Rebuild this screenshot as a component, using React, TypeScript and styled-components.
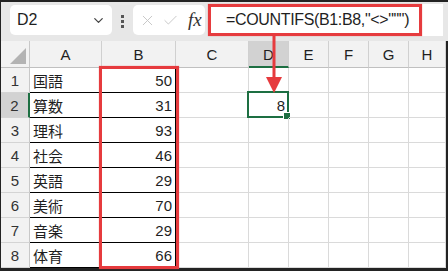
import React from 'react'
import styled, { createGlobalStyle } from 'styled-components'
import { ChevronDown, X, Check } from 'lucide-react'

const GREEN = '#1d6f42'
const RED = '#e63b3e'

const GlobalStyle = createGlobalStyle`
  body {
    margin: 0;
    background: #232323;
  }
`

const Frame = styled.div`
  width: 448px;
  height: 271px;
  box-sizing: border-box;
  padding: 2px 0 0 1px;
  background: #232323;
  overflow: hidden;
`

const Window = styled.div`
  position: relative;
  width: 447px;
  font-family: 'Liberation Sans', 'Noto Sans CJK JP', sans-serif;
  color: #1f1f1f;
`

const Toolbar = styled.div`
  display: flex;
  align-items: flex-start;
  height: 39px;
  box-sizing: border-box;
  padding: 2px 0 0 9px;
  background: #e7e7e7;
`

const NameBox = styled.div`
  display: flex;
  align-items: center;
  justify-content: space-between;
  width: 102px;
  height: 30px;
  margin-top: 1px;
  box-sizing: border-box;
  padding: 0 6px 0 7px;
  background: #fff;
  border-radius: 5px;
  font-size: 16px;
`

const Dots = styled.div`
  display: flex;
  flex-direction: column;
  gap: 2px;
  width: 21px;
  align-items: center;
  padding-top: 11px;

  span {
    width: 3px;
    height: 3px;
    background: #555;
  }
`

const IconBox = styled.div`
  display: flex;
  align-items: center;
  gap: 6px;
  width: 72px;
  height: 30px;
  margin-top: 1px;
  box-sizing: border-box;
  padding-left: 6px;
  background: #fff;
  border-radius: 5px;
  color: #c4c4c4;
`

const Fx = styled.span`
  margin-left: 3px;
  font-family: 'Liberation Serif', serif;
  font-style: italic;
  font-size: 19px;
  color: #333;
`

const FormulaBar = styled.div`
  display: flex;
  width: 235px;
  height: 32px;
  margin-left: 3px;
  background: #fff;
`

const Highlight = styled.div`
  display: flex;
  align-items: center;
  width: 214px;
  height: 32px;
  box-sizing: border-box;
  padding-left: 15px;
  border: 3px solid ${RED};
  box-shadow: 0 0 1px rgba(230, 59, 62, 0.6);
  font-size: 16px;
  letter-spacing: -0.35px;
  white-space: nowrap;
`

const Sheet = styled.div`
  display: grid;
  grid-template-columns: 29px 72px 74px 73px 40px 40px 40px 40px 37px;
  grid-template-rows: 27px repeat(8, 25px);
  width: 445px;
  background: #fff;
  font-size: 15px;
`

const Corner = styled.div`
  position: relative;
  box-sizing: border-box;
  background: #f2f2f2;
  border-right: 1px solid #c8c8c8;
  border-bottom: 1px solid #c0c0c0;

  &::after {
    content: '';
    position: absolute;
    right: 3px;
    bottom: 3px;
    border-style: solid;
    border-width: 0 0 16px 16px;
    border-color: transparent transparent #b3b3b3 transparent;
  }
`

const ColHead = styled.div<{ $active?: boolean }>`
  display: flex;
  align-items: center;
  justify-content: center;
  box-sizing: border-box;
  padding-top: 1px;
  background: ${(p) => (p.$active ? '#d2d2d2' : '#f2f2f2')};
  border-right: 1px solid #d0d0d0;
  border-bottom: ${(p) => (p.$active ? `2px solid ${GREEN}` : '1px solid #c0c0c0')};
`

const RowHead = styled.div<{ $active?: boolean }>`
  display: flex;
  align-items: center;
  justify-content: center;
  box-sizing: border-box;
  background: ${(p) => (p.$active ? '#d2d2d2' : '#f2f2f2')};
  border-right: ${(p) => (p.$active ? `2px solid ${GREEN}` : '1px solid #c8c8c8')};
  border-bottom: 1px solid #d4d4d4;
  color: #333;
`

const Cell = styled.div<{ $table?: boolean; $num?: boolean }>`
  position: relative;
  display: flex;
  align-items: center;
  justify-content: ${(p) => (p.$num ? 'flex-end' : 'flex-start')};
  box-sizing: border-box;
  padding: 0 3px;
  border-right: 1px solid ${(p) => (p.$table ? '#000' : '#dadada')};
  border-bottom: 1px solid ${(p) => (p.$table ? '#000' : '#dadada')};
`

const Selection = styled.div`
  position: absolute;
  top: -2px;
  left: -2px;
  right: -1px;
  bottom: -1px;
  border: 2px solid ${GREEN};
  pointer-events: none;

  &::after {
    content: '';
    position: absolute;
    right: -4px;
    bottom: -4px;
    width: 6px;
    height: 6px;
    background: ${GREEN};
    border: 1px solid #fff;
  }
`

const ColumnMark = styled.div`
  position: absolute;
  left: 98px;
  top: 64px;
  width: 80px;
  height: 203px;
  box-sizing: border-box;
  border: 3px solid ${RED};
  box-shadow: 0 0 1px rgba(230, 59, 62, 0.6);
  pointer-events: none;
`

const Arrow = styled.svg`
  position: absolute;
  left: 263px;
  top: 33px;
`

const columns = ['A', 'B', 'C', 'D', 'E', 'F', 'G', 'H']

const rows: [string, number][] = [
  ['国語', 50],
  ['算数', 31],
  ['理科', 93],
  ['社会', 46],
  ['英語', 29],
  ['美術', 70],
  ['音楽', 29],
  ['体育', 66]
]

const App: React.FC = (): React.ReactElement => (
  <Frame>
    <GlobalStyle />
    <Window>
      <Toolbar>
        <NameBox>
          <span>D2</span>
          <ChevronDown size={15} strokeWidth={2} color="#444" />
        </NameBox>
        <Dots>
          <span />
          <span />
          <span />
        </Dots>
        <IconBox>
          <X size={17} strokeWidth={1.3} />
          <Check size={17} strokeWidth={1.3} />
          <Fx>fx</Fx>
        </IconBox>
        <FormulaBar>
          <Highlight>=COUNTIFS(B1:B8,"&lt;&gt;""")</Highlight>
        </FormulaBar>
      </Toolbar>

      <Sheet>
        <Corner />
        {columns.map((c) => (
          <ColHead key={c} $active={c === 'D'}>
            {c}
          </ColHead>
        ))}

        {rows.map(([name, score], i) => (
          <React.Fragment key={name}>
            <RowHead $active={i === 1}>{i + 1}</RowHead>
            <Cell $table>{name}</Cell>
            <Cell $table $num>
              {score}
            </Cell>
            <Cell />
            <Cell $num>
              {i === 1 && (
                <>
                  8
                  <Selection />
                </>
              )}
            </Cell>
            <Cell />
            <Cell />
            <Cell />
            <Cell />
          </React.Fragment>
        ))}
      </Sheet>

      <ColumnMark />
      <Arrow width="20" height="58" viewBox="0 0 20 58">
        <rect x="8.5" y="0" width="3" height="44" fill={RED} />
        <polygon points="2,42 18,42 10,58" fill={RED} />
      </Arrow>
    </Window>
  </Frame>
)

export default App
